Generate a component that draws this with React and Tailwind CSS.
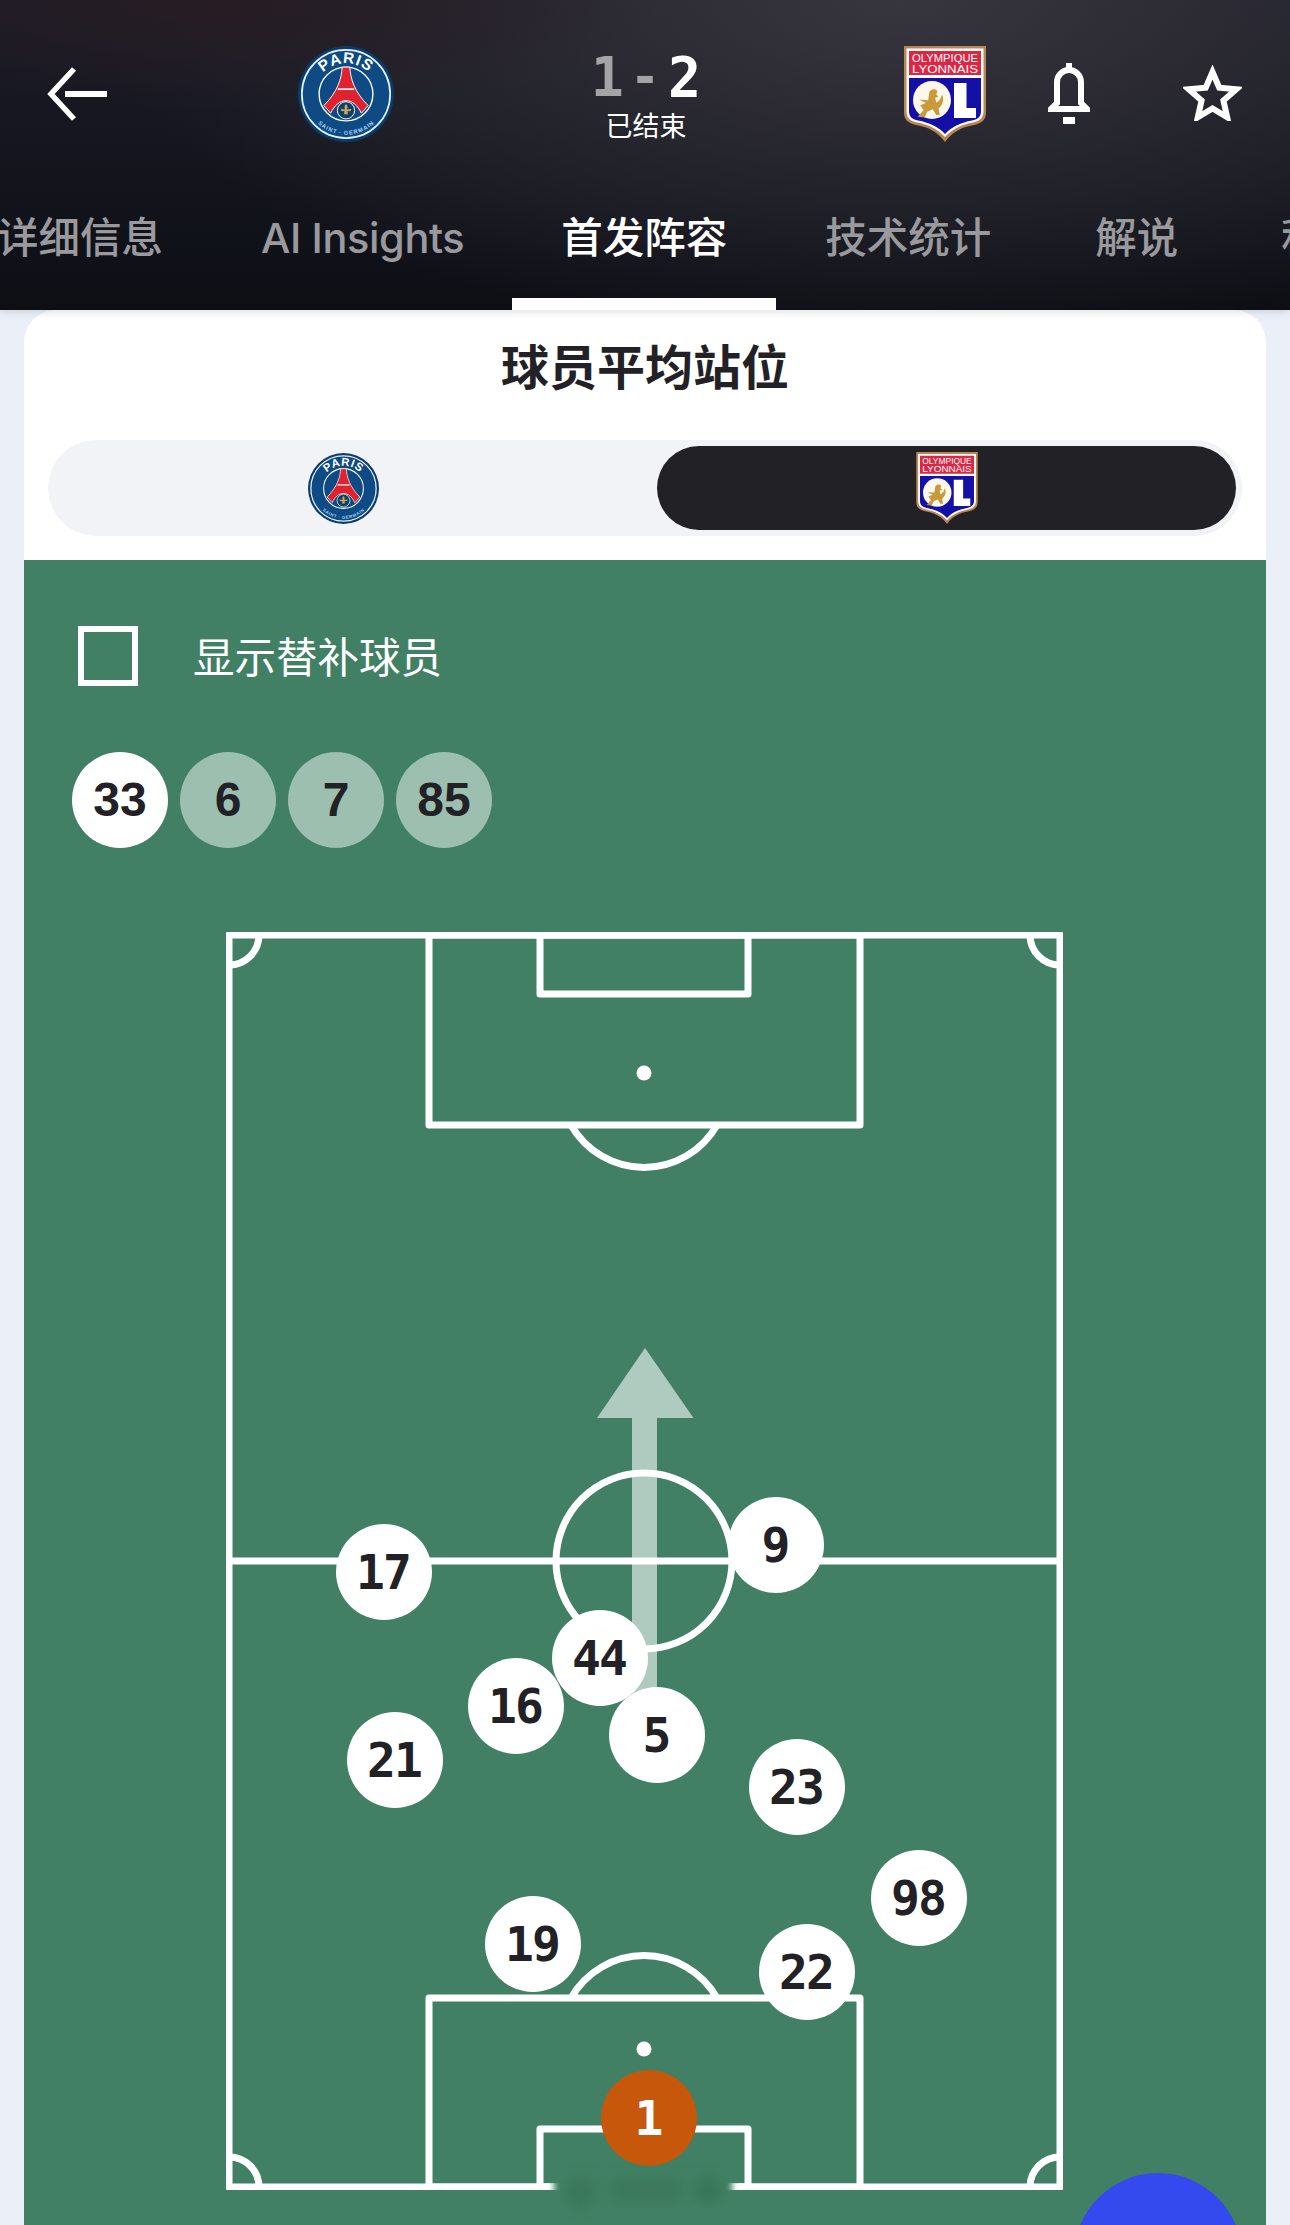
const TABS = [
  { label: '详细信息', className: 'ml-[-52px] px-[49px]' },
  { label: 'AI Insights', className: 'pl-[49px] pr-[48px] tracking-[-0.4px]' },
  { label: '首发阵容', className: 'px-[49px]', active: true },
  { label: '技术统计', className: 'px-[49px]' },
  { label: '解说', className: 'pl-[55px] pr-[52px]' },
  { label: '积分榜', className: 'pl-[51px] pr-[49px]' }
]

const SUBS = [
  { number: 33, active: true },
  { number: 6 },
  { number: 7 },
  { number: 85 }
]

// centres in page pixels, the pitch svg uses the same numbers through its viewBox
const PLAYERS = [
  { number: 17, x: 384, y: 1572 },
  { number: 9, x: 776, y: 1545 },
  { number: 16, x: 516, y: 1706 },
  { number: 44, x: 600, y: 1658 },
  { number: 5, x: 657, y: 1735 },
  { number: 21, x: 395, y: 1760 },
  { number: 23, x: 797, y: 1787 },
  { number: 98, x: 919, y: 1898 },
  { number: 19, x: 533, y: 1944 },
  { number: 22, x: 807, y: 1972 },
  { number: 1, x: 649, y: 2118, keeper: true }
]

const PITCH_LEFT = 226
const PITCH_TOP = 932

function PsgLogo({ className }) {
  return (
    <svg className={className} viewBox="0 0 100 100">
      <defs>
        <path id="psg-top" d="M16 52a34 34 0 0 1 68 0" />
        <path id="psg-bottom" d="M12 56a38.500 38.500 0 0 0 76 0" />
      </defs>
      <circle cx="50" cy="50" r="50" fill="#0c3b68" />
      <circle cx="50" cy="50" r="46" fill="#0e4a84" stroke="#dff1fb" strokeWidth="1.800" />
      <circle cx="50" cy="50" r="28" fill="#0e4a84" stroke="#f2f8fb" strokeWidth="1.500" />
      <path d="M46 22h8c.5 12 5 26 19 40l-7 8c-4-8-9-13-16-13s-12 5-16 13l-7-8c14-14 18.500-28 19-40z" fill="#e0222e" stroke="#fff" strokeWidth="1" />
      <path d="M41.500 45h17" stroke="#fff" strokeWidth="1.800" />
      <circle cx="50" cy="67" r="9" fill="#123f66" stroke="#fff" strokeWidth="1" />
      <path d="M50 60.500c2 2 2 4 .8 5.500h2.700c1-1.200 2.300-.5 1.800 1-.3 1-1.300 1.200-2 .7l-1.700.3.400 3h-4l.4-3-1.700-.3c-.7.5-1.700.3-2-.7-.5-1.500.8-2.200 1.800-1h2.700c-1.200-1.500-1.200-3.500.8-5.500z" fill="#c9a85f" />
      <text fill="#fff" fontFamily="Liberation Sans, sans-serif" fontSize="16" fontWeight="700" letterSpacing="1">
        <textPath href="#psg-top" startOffset="50%" textAnchor="middle">PARIS</textPath>
      </text>
      <text fill="#a9d4f2" fontFamily="Liberation Sans, sans-serif" fontSize="6" fontWeight="700" letterSpacing=".5" dominantBaseline="hanging">
        <textPath href="#psg-bottom" startOffset="50%" textAnchor="middle">SAINT · GERMAIN</textPath>
      </text>
    </svg>
  )
}

function OlLogo({ className }) {
  return (
    <svg className={className} viewBox="0 0 82 96">
      <path d="M0 0h82v66c0 8-4 11-12 13-12 2-22 7-29 17-7-10-17-15-29-17-8-2-12-5-12-13z" fill="#b98852" />
      <path d="M2.500 2.500h77V65c0 7-3.500 10-10.500 11.500-11 2-21 6.500-28 14.500-7-8-17-12.500-28-14.500C5.900 75 2.500 72 2.500 65z" fill="#fff" />
      <rect x="5" y="5" width="72" height="24" fill="#dc2644" />
      <path d="M5 32h72v33c0 6-3 8-9 9.500-11 2-20 6-27 13.500-7-7.500-16-11.500-27-13.500C8 73 5 71 5 65z" fill="#1410a6" />
      <text x="41" y="15.500" textAnchor="middle" fill="#fff" fontFamily="Liberation Sans, sans-serif" fontSize="11" textLength="66" lengthAdjust="spacingAndGlyphs">OLYMPIQUE</text>
      <text x="41" y="26.500" textAnchor="middle" fill="#fff" fontFamily="Liberation Sans, sans-serif" fontSize="11" textLength="66" lengthAdjust="spacingAndGlyphs">LYONNAIS</text>
      <circle cx="28" cy="54" r="19" fill="#fbf7ea" />
      <path d="M19 72l5-6-3-4 5-2-6-3 8 .5 1-7c2-3 5-3 7-1l-1 3 2 2-3 1 1 4c3-1 4-4 5-7 2 4 1 9-3 12l1 6h-3l-3-5-5 2-2 5z" transform="translate(-8 -12) scale(1.150)" fill="#c99a3c" />
      <path d="M50 37h12.500v25H72v10H50z" fill="#fff" />
    </svg>
  )
}

function BackIcon() {
  return (
    <svg className="w-[62px] h-[56px]" viewBox="0 0 62 56" fill="none" stroke="#fff">
      <path d="M28 3 5 28l23 25" strokeWidth="5.500" />
      <path d="M19 28h42" strokeWidth="6" />
    </svg>
  )
}

function BellIcon() {
  return (
    <svg className="w-[42px] h-[61px]" viewBox="0 0 42 61" fill="none" stroke="#fff">
      <path d="M21 0v7" strokeWidth="6" strokeLinecap="round" />
      <path d="M9 40V19a12 12 0 0 1 24 0v21l6 6v0H3v0z" strokeWidth="6" />
      <path d="M15 57.500h12" strokeWidth="7" />
    </svg>
  )
}

function StarIcon() {
  const points = []
  for (let i = 0; i < 10; i++) {
    const radius = i % 2 === 0 ? 25 : 11.5
    const angle = ((-90 + i * 36) * Math.PI) / 180
    points.push(`${29.5 + radius * Math.cos(angle)},${32 + radius * Math.sin(angle)}`)
  }
  return (
    <svg className="w-[59px] h-[56px]" viewBox="0 0 59 56" fill="none" stroke="#fff">
      <polygon points={points.join(' ')} strokeWidth="6" />
    </svg>
  )
}

function Header() {
  return (
    <header className="relative z-10 h-[310px] overflow-hidden bg-[radial-gradient(ellipse_440px_110px_at_220px_0px,#271c24_0%,transparent_100%),radial-gradient(ellipse_800px_340px_at_900px_0px,#37353d_0%,transparent_100%),linear-gradient(to_bottom,#1b1c27_0%,#0d0f15_100%)] shadow-[0_2px_8px_rgba(0,0,0,0.12)]">
      <div className="flex h-[188px] items-start">
        <div className="ml-[46px] mt-[66px]"><BackIcon /></div>
        <PsgLogo className="ml-[190px] mt-[46px] w-[96px] h-[96px]" />
        <div className="ml-[198px] mt-[44px] flex w-[108px] flex-col items-center">
          <div className="flex items-center font-['DejaVu_Sans_Mono',monospace] text-[55px] font-bold leading-[66px]">
            <span className="text-[#a4a4a8]">1</span>
            <span className="ml-[6px] text-[#a4a4a8] text-[50px]">-</span>
            <span className="ml-[8px] text-white">2</span>
          </div>
          <div className="mt-[-3px] whitespace-nowrap font-['Noto_Sans_CJK_SC',sans-serif] text-[27px] leading-[36px] text-white">已结束</div>
        </div>
        <OlLogo className="ml-[204px] mt-[46px] w-[82px] h-[96px]" />
        <div className="ml-[62px] mt-[63px]"><BellIcon /></div>
        <div className="ml-[93px] mt-[65px]"><StarIcon /></div>
      </div>
      <nav className="flex h-[122px] items-stretch whitespace-nowrap">
        {TABS.map((tab) => (
          <div
            key={tab.label}
            className={`relative flex shrink-0 items-start pt-[20px] font-['Inter','Noto_Sans_CJK_SC',sans-serif] text-[41.500px] font-medium leading-[60px] ${tab.className} ${
              tab.active ? 'text-white' : 'text-[#9a9a9e]'
            }`}
          >
            {tab.label}
            {tab.active && <span className="absolute inset-x-0 bottom-0 h-[12px] bg-white" />}
          </div>
        ))}
      </nav>
    </header>
  )
}

function TeamSwitch() {
  return (
    <div className="mx-[24px] flex h-[96px] gap-[24px] rounded-full bg-[#f2f3f7] p-[6px]">
      <div className="flex flex-1 items-center justify-center">
        <PsgLogo className="w-[71px] h-[71px]" />
      </div>
      <div className="flex flex-1 items-center justify-center rounded-full bg-[#212126]">
        <OlLogo className="w-[62px] h-[72px]" />
      </div>
    </div>
  )
}

function SubCircle({ number, active }) {
  return (
    <div
      className={`flex h-[96px] w-[96px] items-center justify-center rounded-full font-['Liberation_Sans',sans-serif] text-[48px] font-bold text-[#222226] ${
        active ? 'bg-white' : 'bg-[#9dbfb0]'
      }`}
    >
      {number}
    </div>
  )
}

function PitchLines() {
  return (
    <svg
      className="block w-[837px] h-[1258px]"
      viewBox={`${PITCH_LEFT} ${PITCH_TOP} 837 1258`}
      fill="none"
      stroke="#fff"
      strokeWidth="7"
      strokeLinejoin="round"
    >
      <path d="M645 1348l48.500 70H657v282h-25v-282h-35z" fill="#fff" fillOpacity=".58" stroke="none" />
      <rect x="229" y="935" width="831" height="1252" />
      <path d="M229 1561h831" />
      <circle cx="644" cy="1561" r="88" />

      <rect x="429" y="935" width="431" height="190" />
      <rect x="540" y="935" width="208" height="59" />
      <circle cx="644" cy="1073" r="7.500" fill="#fff" stroke="none" />
      <path d="M571 1125a84 84 0 0 0 146 0" />

      <rect x="429" y="1998" width="431" height="189" />
      <rect x="540" y="2129" width="208" height="58" />
      <circle cx="644" cy="2049" r="7.500" fill="#fff" stroke="none" />
      <path d="M571 1998a84 84 0 0 1 146 0" />

      <path d="M259 935a30 30 0 0 1-30 30" />
      <path d="M1030 935a30 30 0 0 0 30 30" />
      <path d="M259 2187a30 30 0 0 0-30-30" />
      <path d="M1030 2187a30 30 0 0 1 30-30" />
    </svg>
  )
}

function Player({ number, x, y, keeper }) {
  return (
    <div
      className={`absolute flex h-[96px] w-[96px] items-center justify-center rounded-full pr-[2px] font-['DejaVu_Sans_Mono',monospace] text-[48px] font-bold tracking-[-2px] ${
        keeper ? 'bg-[#c6570b] text-white' : 'bg-white text-[#222226]'
      }`}
      style={{ left: x - PITCH_LEFT - 48, top: y - PITCH_TOP - 48 }}
    >
      {number}
    </div>
  )
}

function App() {
  return (
    <div className="relative h-[2225px] w-[1290px] overflow-hidden bg-[#ebeff8]">
      <Header />
      <main className="mx-[24px] overflow-hidden rounded-t-[32px] bg-white">
        <h2 className="h-[130px] pt-[24px] text-center font-['Noto_Sans_CJK_SC',sans-serif] text-[48px] font-bold leading-[60px] text-[#222226]">
          球员平均站位
        </h2>
        <TeamSwitch />
        <section className="mt-[24px] h-[1665px] bg-[#418064] pt-[66px]">
          <label className="ml-[54px] flex h-[60px] items-center gap-[55px]">
            <span className="h-[60px] w-[60px] border-[6px] border-white" />
            <span className="pb-[2px] font-['Noto_Sans_CJK_SC',sans-serif] text-[41.500px] font-normal leading-[58px] text-white">显示替补球员</span>
          </label>
          <div className="ml-[48px] mt-[66px] flex gap-[12px]">
            {SUBS.map((sub) => (
              <SubCircle key={sub.number} number={sub.number} active={sub.active} />
            ))}
          </div>
          <div className="relative ml-[202px] mt-[84px] w-[837px]">
            <PitchLines />
            {PLAYERS.map((player) => (
              <Player key={player.number} {...player} />
            ))}
            {/* smudged watermark over the bottom line */}
            <div className="absolute left-[328px] top-[1238px] h-[42px] w-[178px] bg-[#418064] blur-[3px]" />
            <div className="absolute left-[340px] top-[1245px] h-[30px] w-[28px] rounded-full bg-[#3b785c] blur-[6px]" />
            <div className="absolute left-[384px] top-[1246px] h-[24px] w-[72px] rounded-full bg-[#3c795d] blur-[6px]" />
            <div className="absolute left-[468px] top-[1246px] h-[24px] w-[28px] rounded-full bg-[#39765a] blur-[6px]" />
          </div>
        </section>
      </main>
      <div className="absolute left-[1074px] top-[2173px] h-[168px] w-[168px] rounded-full bg-[#3449ee]" />
    </div>
  )
}

export default App
